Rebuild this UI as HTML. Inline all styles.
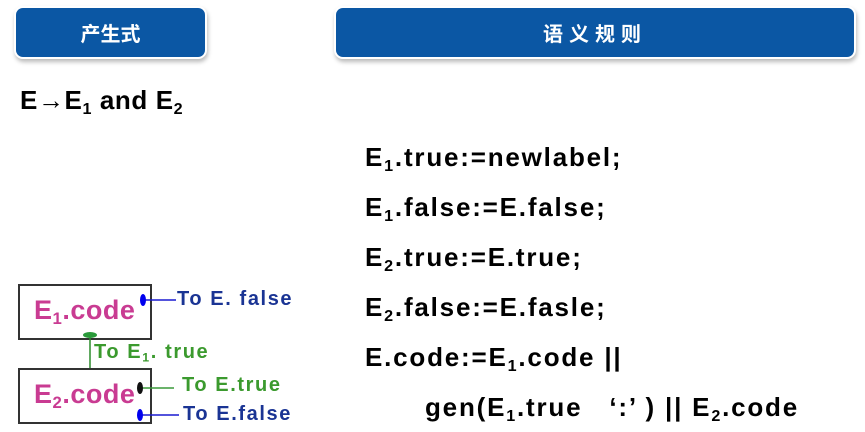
<!DOCTYPE html>
<html><head><meta charset="utf-8"><style>
body{margin:0;width:865px;height:432px;background:#fff;position:relative;overflow:hidden;font-family:"Liberation Sans","Noto Sans CJK SC",sans-serif;font-weight:bold}
.hd{position:absolute;top:8px;height:49px;background:#0b57a4;border-radius:7px;box-shadow:0 0 0 2px #fff,1px 3px 4px 2px #bbb;color:#fff;font-size:20px;display:flex;align-items:center;justify-content:center;font-family:"Noto Sans CJK SC",sans-serif;font-weight:bold}
.t{position:absolute;white-space:nowrap}
.r{font-size:26px;letter-spacing:1.8px;color:#000;left:365px}
sub{font-size:0.62em;vertical-align:-0.3em;line-height:0}
.box{position:absolute;left:18px;width:134px;height:56px;border:2px solid #333;box-sizing:border-box}
.code{color:#c93b92;font-size:27px;letter-spacing:0.5px}
.s{font-size:20px;letter-spacing:1.6px}
</style></head><body>
<div class="hd" style="left:16px;width:189px">产生式</div>
<div class="hd" style="left:336px;width:518px;letter-spacing:6px">语义规则</div>
<div class="t" style="left:20px;top:85px;font-size:26px;letter-spacing:0.6px">E→E<sub>1</sub> and E<sub>2</sub></div>

<div class="t r" style="top:142px">E<sub>1</sub>.true:=newlabel;</div>
<div class="t r" style="top:192px">E<sub>1</sub>.false:=E.false;</div>
<div class="t r" style="top:242px">E<sub>2</sub>.true:=E.true;</div>
<div class="t r" style="top:292px">E<sub>2</sub>.false:=E.fasle;</div>
<div class="t r" style="top:342px">E.code:=E<sub>1</sub>.code ||</div>
<div class="t r" style="top:392px;left:425px">gen(E<sub>1</sub>.true &nbsp;&nbsp;‘:’ ) || E<sub>2</sub>.code</div>

<div class="box" style="top:284px"></div>
<div class="box" style="top:368px"></div>
<div class="t code" style="left:34px;top:295px">E<sub>1</sub>.code</div>
<div class="t code" style="left:34px;top:379px">E<sub>2</sub>.code</div>
<svg width="865" height="432" style="position:absolute;left:0;top:0">
<line x1="143" y1="300" x2="176" y2="300" stroke="#1a1ad0" stroke-width="1.5"/>
<ellipse cx="143" cy="300" rx="3" ry="6" fill="#0000ee"/>
<line x1="90" y1="335" x2="90" y2="368" stroke="#2a8a2a" stroke-width="1.5"/>
<ellipse cx="90" cy="335" rx="7" ry="3" fill="#2a9a3a"/>
<line x1="140" y1="388" x2="174" y2="388" stroke="#3a9a3a" stroke-width="1.5"/>
<ellipse cx="140" cy="388" rx="3" ry="6" fill="#111"/>
<line x1="140" y1="415" x2="179" y2="415" stroke="#1a1ad0" stroke-width="1.5"/>
<ellipse cx="140" cy="415" rx="3" ry="6" fill="#0000ee"/>
</svg>
<div class="t s" style="left:177px;top:288px;color:#1a3494">To E. false</div>
<div class="t s" style="left:94px;top:341px;color:#3b9a2e">To E<sub>1</sub>. true</div>
<div class="t s" style="left:182px;top:374px;color:#3b9a2e">To E.true</div>
<div class="t s" style="left:183px;top:403px;color:#1a3494">To E.false</div>
</body></html>
